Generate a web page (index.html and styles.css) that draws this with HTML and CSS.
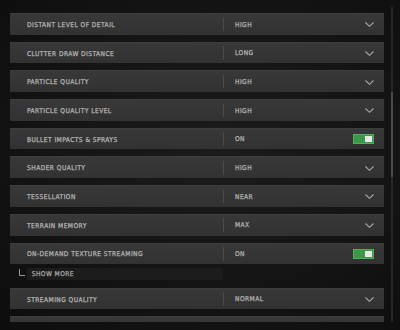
FILE: index.html
```html
<!DOCTYPE html>
<html>
<head>
	<title>Graphics settings</title>
	<meta name="viewport" content="width=device-width">
	<link rel="stylesheet" href="styles.css">
</head>
<body>
	<div class="screen">
		<ul class="list">
			<li class="row">
				<span class="label">Distant Level of Detail</span>
				<span class="value">High</span>
				<svg class="chev" viewBox="0 0 9 5"><path d="M0.5 0.5 L4.5 4.3 L8.5 0.5"/></svg>
			</li>
			<li class="row">
				<span class="label">Clutter Draw Distance</span>
				<span class="value">Long</span>
				<svg class="chev" viewBox="0 0 9 5"><path d="M0.5 0.5 L4.5 4.3 L8.5 0.5"/></svg>
			</li>
			<li class="row">
				<span class="label">Particle Quality</span>
				<span class="value">High</span>
				<svg class="chev" viewBox="0 0 9 5"><path d="M0.5 0.5 L4.5 4.3 L8.5 0.5"/></svg>
			</li>
			<li class="row">
				<span class="label">Particle Quality Level</span>
				<span class="value">High</span>
				<svg class="chev" viewBox="0 0 9 5"><path d="M0.5 0.5 L4.5 4.3 L8.5 0.5"/></svg>
			</li>
			<li class="row">
				<span class="label">Bullet Impacts &amp; Sprays</span>
				<span class="value">On</span>
				<span class="toggle"><span class="knob"></span></span>
			</li>
			<li class="row">
				<span class="label">Shader Quality</span>
				<span class="value">High</span>
				<svg class="chev" viewBox="0 0 9 5"><path d="M0.5 0.5 L4.5 4.3 L8.5 0.5"/></svg>
			</li>
			<li class="row">
				<span class="label">Tessellation</span>
				<span class="value">Near</span>
				<svg class="chev" viewBox="0 0 9 5"><path d="M0.5 0.5 L4.5 4.3 L8.5 0.5"/></svg>
			</li>
			<li class="row">
				<span class="label">Terrain Memory</span>
				<span class="value">Max</span>
				<svg class="chev" viewBox="0 0 9 5"><path d="M0.5 0.5 L4.5 4.3 L8.5 0.5"/></svg>
			</li>
			<li class="row row-parent">
				<span class="label">On-Demand Texture Streaming</span>
				<span class="value">On</span>
				<span class="toggle"><span class="knob"></span></span>
			</li>
			<li class="more">
				<svg class="elbow" viewBox="0 0 6 7"><path d="M0.5 0 V6.5 H6"/></svg>
				<span class="more-bar">Show More</span>
			</li>
			<li class="row">
				<span class="label">Streaming Quality</span>
				<span class="value">Normal</span>
				<svg class="chev" viewBox="0 0 9 5"><path d="M0.5 0.5 L4.5 4.3 L8.5 0.5"/></svg>
			</li>
			<!-- next row, cut off by the panel edge -->
			<li class="row"></li>
		</ul>
		<div class="scroll"><div class="thumb"></div></div>
	</div>
</body>
</html>
```

FILE: styles.css
```css
*{
	margin: 0;
	padding: 0;
	list-style: none;
	box-sizing: border-box;
}
html, body{
	width: 400px;
	height: 330px;
	overflow: hidden;
}
body{
	background: radial-gradient(ellipse at 55% 45%, #1b1b1b 0%, #141414 55%, #0d0d0d 100%);
	font-family: "DejaVu Sans Condensed", "Liberation Sans", sans-serif;
	color: #b4b4b4;
	-webkit-text-stroke: 0.25px currentColor;
}
.screen{
	display: flex;
	height: 322px;
	overflow: hidden;
}
.list{
	width: 374px;
	margin-left: 10px;
	padding-top: 13px;
}
.row{
	display: flex;
	align-items: center;
	height: 21.7px;
	margin-bottom: 7px;
	background: linear-gradient(#383838, #323232);
	border-top: 1px solid #3e3e3e;
	font-size: 6.6px;
	letter-spacing: 0.45px;
	text-transform: uppercase;
}
.row-parent{
	margin-bottom: 4px;
}
.label{
	width: 213px;
	padding: 1px 0 0 17px;
	white-space: nowrap;
}
.value{
	flex: 1;
	height: 13.5px;
	line-height: 13.5px;
	padding: 1px 0 0 11px;
	border-left: 1px solid #4b4b4b;
}
.chev{
	width: 9px;
	height: 5px;
	margin: 1px 10px 0 0;
	fill: none;
	stroke: #a8a8a8;
	stroke-width: 1.1;
}
.toggle{
	display: flex;
	justify-content: flex-end;
	width: 21px;
	height: 10px;
	margin-right: 10px;
	padding: 1px;
	background: #3a9848;
	border: 1px solid #4fb05c;
}
.knob{
	width: 7px;
	height: 100%;
	background: #e8e8e8;
}
.more{
	display: flex;
	align-items: flex-start;
	height: 12.3px;
	margin-bottom: 7.3px;
}
.elbow{
	width: 6px;
	height: 7px;
	margin: 0.5px 1.7px 0 9px;
	fill: none;
	stroke: #9a9a9a;
	stroke-width: 1;
}
.more-bar{
	width: 196px;
	height: 100%;
	line-height: 13px;
	padding-left: 5px;
	background: #1c1c1c;
	font-size: 6.6px;
	letter-spacing: 0.45px;
	text-transform: uppercase;
	color: #a8a8a8;
}
.scroll{
	width: 2px;
	height: 325px;
	margin: 7px 0 0 7px;
	padding-top: 85px;
	background: #262626;
}
.thumb{
	height: 85px;
	background: #4a4a4a;
}
```
